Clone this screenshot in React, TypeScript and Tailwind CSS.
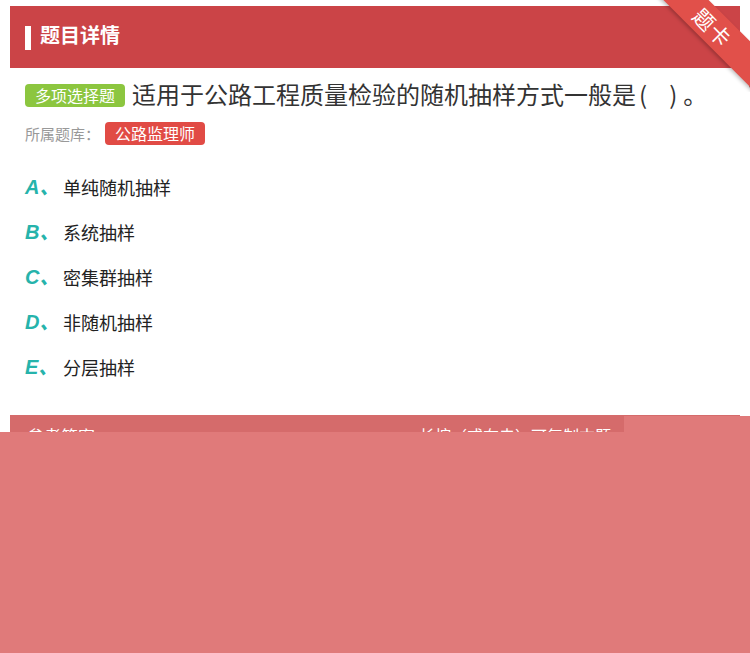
import React from 'react';

const options = [
  { key: 'A', text: '单纯随机抽样' },
  { key: 'B', text: '系统抽样' },
  { key: 'C', text: '密集群抽样' },
  { key: 'D', text: '非随机抽样' },
  { key: 'E', text: '分层抽样' },
];

const cjk = { fontFamily: '"Noto Sans CJK SC", "Noto Sans", sans-serif' };

const Ribbon = () => (
  <div className="absolute top-0 right-0 w-[100px] h-[92px] overflow-hidden pointer-events-none">
    {/* fold behind the header */}
    <div className="absolute right-0 top-[62px] w-0 h-0 border-l-[10px] border-l-transparent border-t-[26px] border-t-[#a8302c]" />
    <div className="absolute left-[-17px] top-[11px] w-[160px] h-[32px] rotate-45 bg-[#e1504a] shadow-[0_2px_4px_rgba(0,0,0,0.25)] flex items-center justify-center">
      <span className="text-white text-[21px] leading-none tracking-[1px]" style={cjk}>
        题卡
      </span>
    </div>
  </div>
);

export default function App() {
  return (
    <div className="relative w-full min-h-[653px] bg-white overflow-hidden" style={cjk}>
      <div className="pt-[6px] px-[10px]">
        {/* header */}
        <div className="h-[62px] bg-[#cb4447] flex items-center pl-[15px]">
          <div className="w-[6px] h-[24px] bg-white mt-[1px]" />
          <span className="ml-[9px] text-white text-[20px] font-bold leading-none -mt-[5px]">题目详情</span>
        </div>

        <div className="px-[15px]">
          {/* question */}
          <div className="mt-[14px] h-[27px] flex items-center">
            <span className="h-[23px] px-[10px] rounded-[4px] bg-[#8cc63f] text-white text-[16px] leading-[23px] shrink-0">
              多项选择题
            </span>
            <span className="ml-[7px] text-[24px] text-[#333] leading-none whitespace-nowrap -mt-[3px] flex items-center">
              适用于公路工程质量检验的随机抽样方式一般是
              <span className="ml-[3px]">(</span>
              <span className="inline-block w-[22px]" />
              <span>)</span>
              <span className="ml-[6px]">。</span>
            </span>
          </div>

          <div className="mt-[12px] h-[24px] flex items-center">
            <span className="text-[15px] text-[#999] leading-none">所属题库：</span>
            <span className="ml-[5px] h-[23px] px-[10px] rounded-[4px] bg-[#e14b45] text-white text-[16px] leading-[23px]">
              公路监理师
            </span>
          </div>

          {/* options */}
          <div className="mt-[19px]">
            {options.map((o) => (
              <div key={o.key} className="h-[45px] flex items-center">
                <span
                  className="w-[38px] text-[#26b3ab] text-[20px] font-bold italic leading-none"
                  style={{ fontFamily: '"Liberation Sans", "Noto Sans CJK SC", sans-serif' }}
                >
                  {o.key}、
                </span>
                <span className="text-[18px] text-[#222] leading-none">{o.text}</span>
              </div>
            ))}
          </div>
        </div>

        {/* answer bar */}
        <div className="mt-[26px] h-[50px] bg-[#d56b6b] flex items-start justify-between px-[17px] pt-[12px]">
          <span className="text-white text-[17px] leading-none">参考答案</span>
          <span className="text-white text-[16px] leading-none mr-[112px]">长按（或右击）可复制本题</span>
        </div>
      </div>

      <Ribbon />

      {/* overlay */}
      <div className="absolute left-0 right-0 top-[432px] bottom-0 bg-[#e07a7a]" />
      <div className="absolute left-[624px] right-0 top-[416px] h-[16px] bg-[#e07a7a]" />
    </div>
  );
}
